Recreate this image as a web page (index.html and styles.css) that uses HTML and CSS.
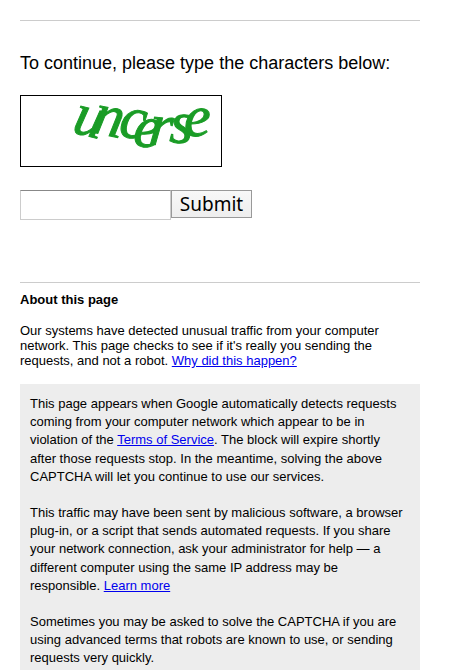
FILE: index.html
```html
<!DOCTYPE html>
<html lang="en">
<head>
<meta charset="utf-8">
<meta name="viewport" content="width=device-width">
<title>Unusual traffic</title>
<link rel="stylesheet" href="styles.css">
</head>
<body>
<main class="page">
  <hr class="rule">
  <form class="challenge">
    <label class="prompt" for="answer">To continue, please type the characters below:</label>
    <svg class="captcha" viewBox="0 0 200 70" role="img" aria-label="Verification characters">
      <text class="letters" x="50 70 97 111 127 148 163" y="36 36 40 49 48 46 40" rotate="14 12 8 8 6 4 0">uncerse</text>
    </svg>
    <div class="entry">
      <input class="answer" id="answer" type="text" autocomplete="off">
      <button class="submit" type="submit">Submit</button>
    </div>
  </form>
  <hr class="rule">
  <section class="about">
    <h1 class="title">About this page</h1>
    <p class="intro">Our systems have detected unusual traffic from your computer network. This page checks to see if it's really you sending the requests, and not a robot. <a href="#details">Why did this happen?</a></p>
    <div class="details" id="details">
      <p>This page appears when Google automatically detects requests coming from your computer network which appear to be in violation of the <a href="#terms">Terms of Service</a>. The block will expire shortly after those requests stop. In the meantime, solving the above CAPTCHA will let you continue to use our services.</p>
      <p>This traffic may have been sent by malicious software, a browser plug-in, or a script that sends automated requests. If you share your network connection, ask your administrator for help — a different computer using the same IP address may be responsible. <a href="#learn">Learn more</a></p>
      <p>Sometimes you may be asked to solve the CAPTCHA if you are using advanced terms that robots are known to use, or sending requests very quickly.</p>
    </div>
  </section>
</main>
</body>
</html>
```
FILE: styles.css
```css
body {
  margin: 0;
  background: #fff;
  color: #000;
  font: 13px/15px "Liberation Sans", Arial, sans-serif;
}

.page {
  max-width: 400px;
  padding: 20px 20px 0;
}

.rule {
  height: 1px;
  margin: 0;
  border: 0;
  background: #ccc;
}

.challenge {
  padding: 31px 0 62px;
}

.prompt {
  display: block;
  font-size: 18px;
  line-height: 22px;
}

.captcha {
  display: block;
  width: 200px;
  height: 70px;
  margin: 21px 0 23px;
  border: 1px solid #000;
}

.letters {
  fill: #1a9c26;
  stroke: #1a9c26;
  stroke-width: 1;
  font: italic 60px "Liberation Serif", serif;
}

.entry {
  display: flex;
}

.answer {
  box-sizing: border-box;
  width: 151px;
  height: 30px;
  margin: 0;
  border: 1px solid #ccc;
  border-top-color: #888;
  border-radius: 0;
  font-size: 20px;
}

.submit {
  width: 81px;
  height: 28px;
  padding: 0;
  border: 1px solid #999;
  background: linear-gradient(#f8f8f8, #eee);
  color: #000;
  font: 19px/24px "Noto Sans", sans-serif;
}

.title {
  margin: 9px 0 16px;
  font-size: 13px;
  line-height: 15px;
}

.intro {
  margin: 0 0 16px;
}

.details {
  padding: 11px 16px 10px 10px;
  background: #ededed;
  line-height: 1.4;
}

.details p {
  margin: 0 0 18px;
}

a {
  color: #00e;
}
```
